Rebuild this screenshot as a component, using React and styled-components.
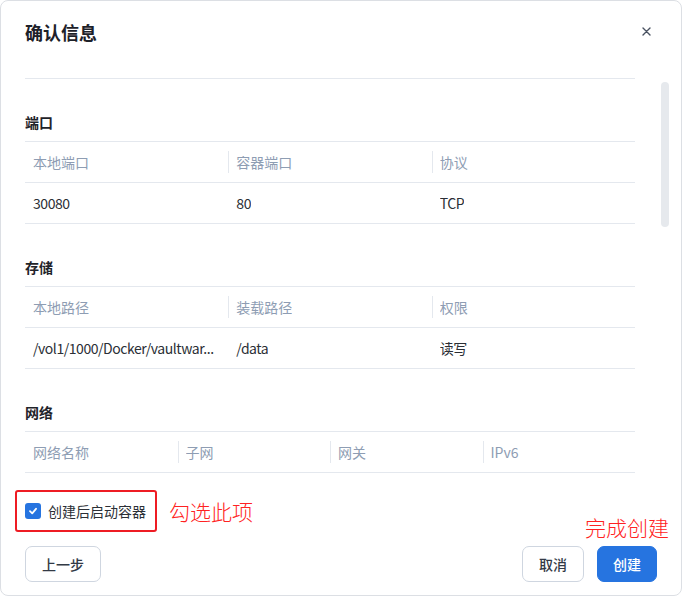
import React from "react";
import styled, { createGlobalStyle } from "styled-components";

const Global = createGlobalStyle`
  html, body { margin: 0; padding: 0; background: #ffffff; }
  body { font-family: "Noto Sans CJK SC", "Noto Sans", sans-serif; }
  * { box-sizing: border-box; }
`;

const Dialog = styled.div`
  width: 682px;
  height: 596px;
  border: 1px solid #dcdfe4;
  border-radius: 8px;
  background: #fff;
  display: flex;
  flex-direction: column;
  overflow: hidden;
  position: relative;
`;

const Header = styled.div`
  height: 61px;
  padding: 0 30px 0 24px;
  display: flex;
  align-items: center;
  justify-content: space-between;
`;

const Title = styled.h2`
  margin: 0;
  font-size: 18px;
  line-height: 24px;
  font-weight: 700;
  color: #1d2129;
`;

const CloseBtn = styled.button`
  border: 0;
  background: none;
  padding: 0;
  width: 10px;
  height: 10px;
  display: flex;
  align-items: center;
  justify-content: center;
  cursor: pointer;
`;

const Body = styled.div`
  flex: 1;
  min-height: 0;
  overflow: hidden;
  position: relative;
  padding: 16px 46px 0 24px;
`;

const Thumb = styled.div`
  position: absolute;
  right: 12px;
  top: 20px;
  width: 8px;
  height: 145px;
  border-radius: 4px;
  background: #e6e9ed;
`;

const Divider = styled.div`
  height: 1px;
  background: #e4e8ee;
`;

const Section = styled.section`
  margin-top: 33px;
`;

const SectionTitle = styled.div`
  font-size: 14px;
  line-height: 20px;
  font-weight: 700;
  color: #1f2329;
  margin-bottom: 9px;
`;

const Row = styled.div`
  display: grid;
  grid-template-columns: repeat(${(p) => p.$cols}, 1fr);
  height: 41px;
  border-top: 1px solid #e4e8ee;
  &:last-child {
    height: 42px;
    border-bottom: 1px solid #e4e8ee;
  }
`;

const Cell = styled.div`
  position: relative;
  display: flex;
  align-items: center;
  padding: 0 6px 0 8px;
  font-size: 14px;
  min-width: 0;
  letter-spacing: ${(p) => (p.$head ? "0" : "-0.45px")};
  color: ${(p) => (p.$head ? "#8e9db3" : "#2b2f36")};
  & > span {
    overflow: hidden;
    white-space: nowrap;
  }
  ${(p) =>
    p.$head &&
    `
    &:not(:first-child)::before {
      content: "";
      position: absolute;
      left: 0;
      top: 9px;
      bottom: 9px;
      width: 1px;
      background: #e4e8ee;
    }
  `}
`;

const Footer = styled.div`
  padding: 10px 24px 13px 24px;
  display: flex;
  flex-direction: column;
  gap: 14px;
`;

const CheckLine = styled.div`
  display: flex;
  align-items: center;
  gap: 12px;
  margin-left: -10px;
`;

const Highlight = styled.label`
  display: inline-flex;
  align-items: center;
  gap: 7px;
  border: 2px solid #ee1c24;
  border-radius: 3px;
  padding: 0 9px 0 8px;
  height: 42px;
`;

const Box = styled.span`
  width: 16px;
  height: 16px;
  border-radius: 3px;
  background: #2674e0;
  display: flex;
  align-items: center;
  justify-content: center;
`;

const CheckLabel = styled.span`
  font-size: 14px;
  line-height: 20px;
  color: #2b2f36;
`;

const Note = styled.span`
  font-size: 21px;
  line-height: 26px;
  font-weight: 300;
  color: #ff2222;
  white-space: nowrap;
`;

const ButtonRow = styled.div`
  display: flex;
  align-items: center;
  justify-content: space-between;
`;

const RightGroup = styled.div`
  display: flex;
  gap: 13px;
`;

const BtnWrap = styled.div`
  position: relative;
`;

const Btn = styled.button`
  height: 36px;
  padding: 0 ${(p) => p.$px || 15}px;
  border-radius: 7px;
  font-family: inherit;
  font-size: 14px;
  font-weight: 500;
  cursor: pointer;
  border: 1px solid ${(p) => (p.$primary ? "#2674e0" : "#cfd6e0")};
  background: ${(p) => (p.$primary ? "#2674e0" : "#fff")};
  color: ${(p) => (p.$primary ? "#fff" : "#333a46")};
`;

const FloatNote = styled(Note)`
  position: absolute;
  left: 50%;
  bottom: calc(100% + 6px);
  transform: translateX(-50%);
`;

function Table({ cols, head, rows }) {
  return (
    <div>
      <Row $cols={cols}>
        {head.map((h) => (
          <Cell $head key={h}>
            <span>{h}</span>
          </Cell>
        ))}
      </Row>
      {rows.map((r, i) => (
        <Row $cols={cols} key={i}>
          {r.map((c, j) => (
            <Cell key={j}>
              <span>{c}</span>
            </Cell>
          ))}
        </Row>
      ))}
    </div>
  );
}

export default function App() {
  return (
    <>
      <Global />
      <Dialog>
        <Header>
          <Title>确认信息</Title>
          <CloseBtn aria-label="关闭">
            <svg width="9" height="9" viewBox="0 0 9 9">
              <path d="M1 1L8 8M8 1L1 8" stroke="#4a5261" strokeWidth="1.4" strokeLinecap="round" />
            </svg>
          </CloseBtn>
        </Header>
        <Body>
          <Divider />
          <Section>
            <SectionTitle>端口</SectionTitle>
            <Table cols={3} head={["本地端口", "容器端口", "协议"]} rows={[["30080", "80", "TCP"]]} />
          </Section>
          <Section>
            <SectionTitle>存储</SectionTitle>
            <Table
              cols={3}
              head={["本地路径", "装载路径", "权限"]}
              rows={[["/vol1/1000/Docker/vaultwar...", "/data", "读写"]]}
            />
          </Section>
          <Section>
            <SectionTitle>网络</SectionTitle>
            <Table cols={4} head={["网络名称", "子网", "网关", "IPv6"]} rows={[]} />
          </Section>
          <Thumb />
        </Body>
        <Footer>
          <CheckLine>
            <Highlight>
              <Box>
                <svg width="10" height="10" viewBox="0 0 10 10">
                  <path d="M2 5.2L4.2 7.3L8 2.8" stroke="#fff" strokeWidth="1.8" fill="none" strokeLinecap="round" strokeLinejoin="round" />
                </svg>
              </Box>
              <CheckLabel>创建后启动容器</CheckLabel>
            </Highlight>
            <Note>勾选此项</Note>
          </CheckLine>
          <ButtonRow>
            <Btn $px={16}>上一步</Btn>
            <RightGroup>
              <Btn $px={16}>取消</Btn>
              <BtnWrap>
                <FloatNote>完成创建</FloatNote>
                <Btn $primary $px={15}>创建</Btn>
              </BtnWrap>
            </RightGroup>
          </ButtonRow>
        </Footer>
      </Dialog>
    </>
  );
}
